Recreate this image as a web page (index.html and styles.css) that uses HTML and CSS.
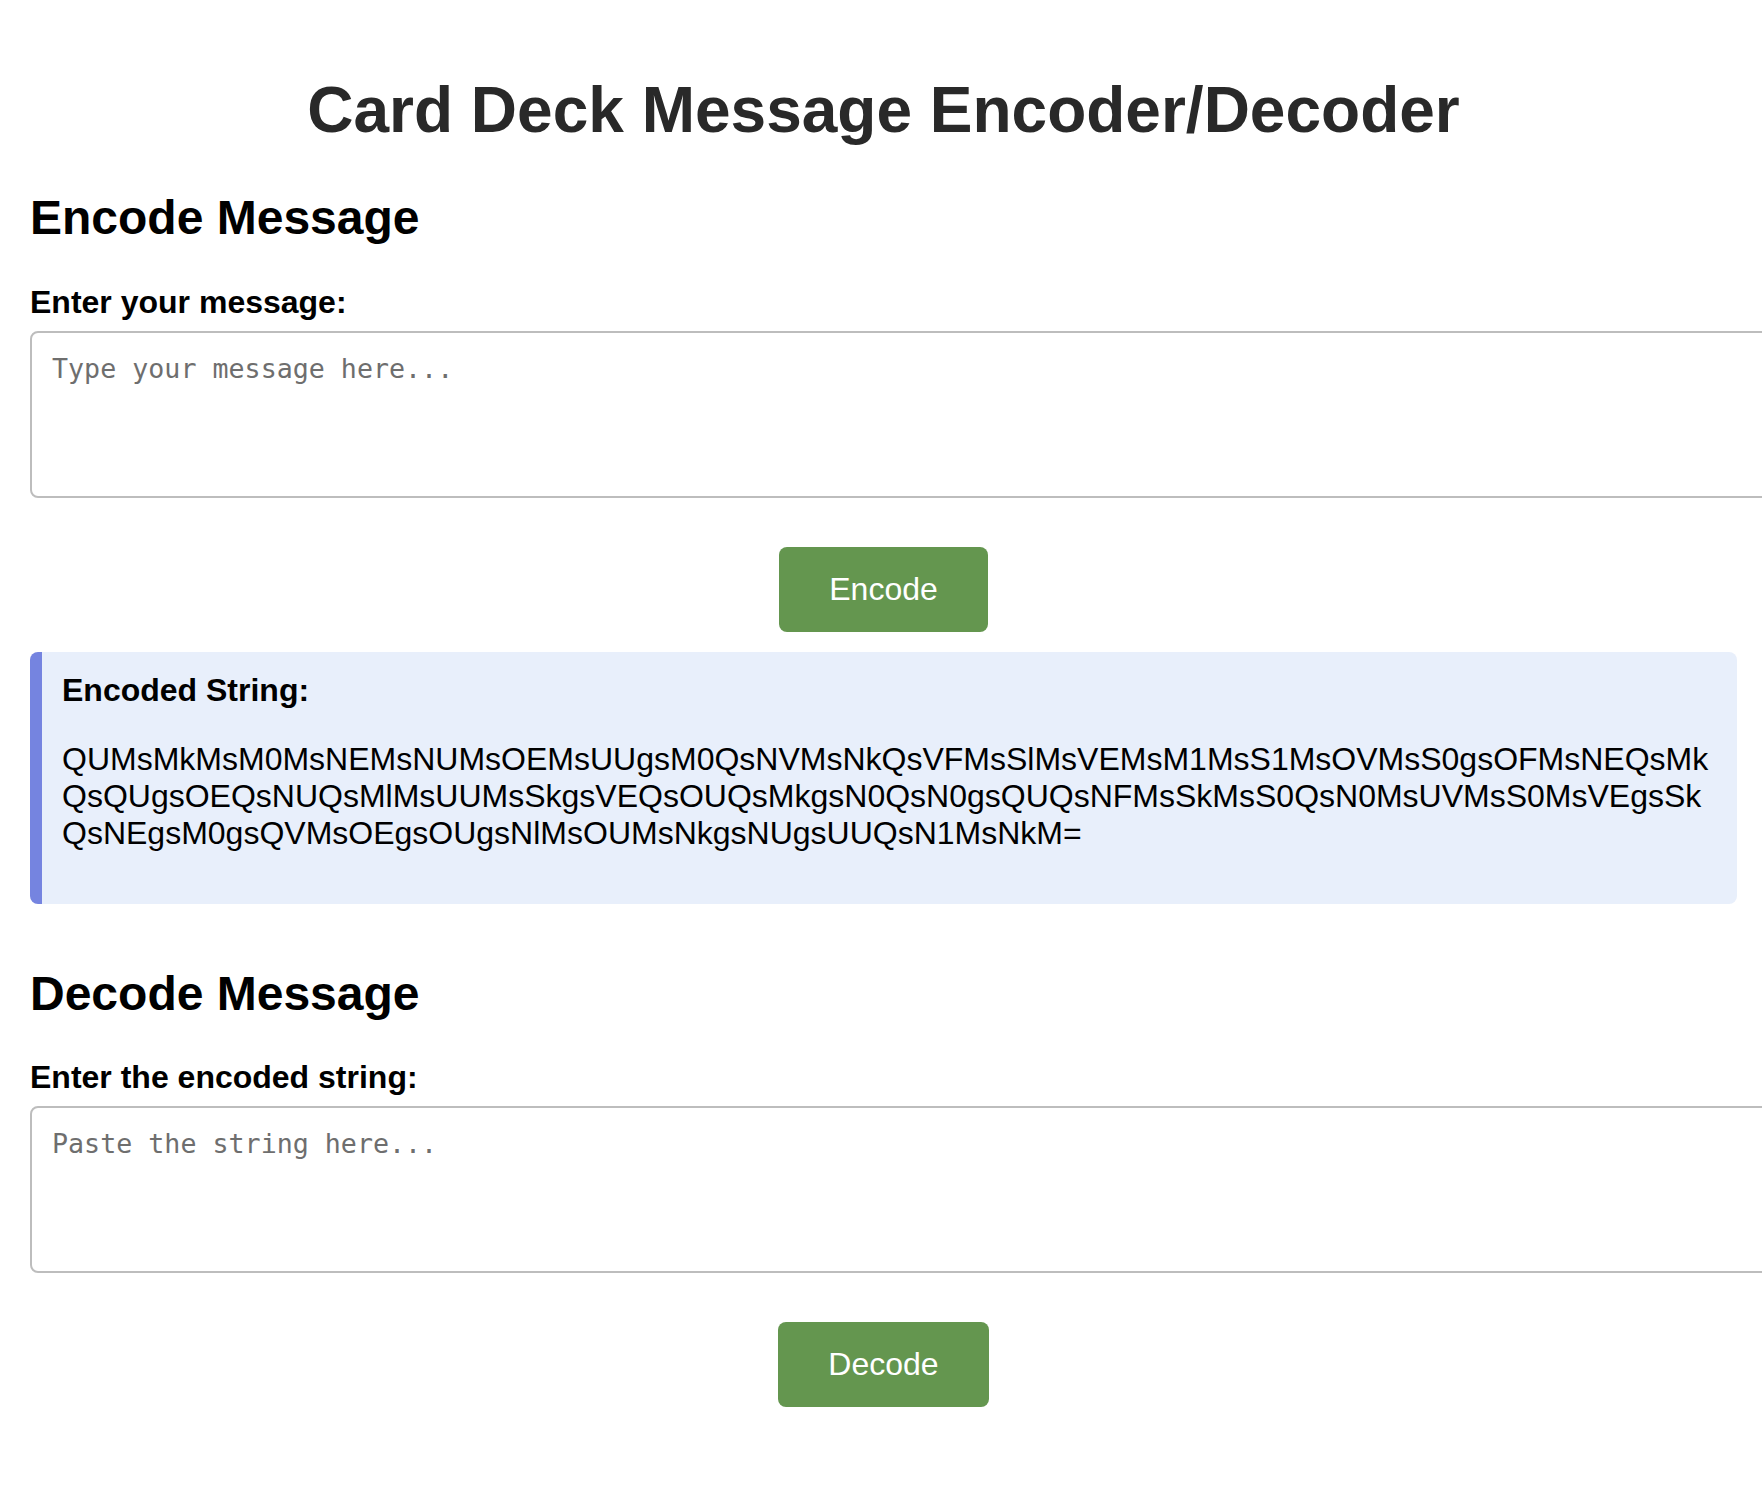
FILE: index.html
```html
<!DOCTYPE html>
<html lang="en">
<head>
<meta charset="utf-8">
<title>Card Deck Message Encoder/Decoder</title>
<link rel="stylesheet" href="styles.css">
</head>
<body>
<div class="container">
  <h1 class="title">Card Deck Message Encoder/Decoder</h1>

  <section class="section">
    <h2 class="section-title">Encode Message</h2>
    <label class="field-label" for="msg">Enter your message:</label>
    <textarea id="msg" class="field" placeholder="Type your message here..."></textarea>
    <div class="btn-row">
      <button class="btn" type="button">Encode</button>
    </div>
    <div class="result">
      <strong class="result-label">Encoded String:</strong>
      <p class="result-text">QUMsMkMsM0MsNEMsNUMsOEMsUUgsM0QsNVMsNkQsVFMsSlMsVEMsM1MsS1MsOVMsS0gsOFMsNEQsMkQsQUgsOEQsNUQsMlMsUUMsSkgsVEQsOUQsMkgsN0QsN0gsQUQsNFMsSkMsS0QsN0MsUVMsS0MsVEgsSkQsNEgsM0gsQVMsOEgsOUgsNlMsOUMsNkgsNUgsUUQsN1MsNkM=</p>
    </div>
  </section>

  <section class="section section-decode">
    <h2 class="section-title">Decode Message</h2>
    <label class="field-label" for="enc">Enter the encoded string:</label>
    <textarea id="enc" class="field" placeholder="Paste the string here..."></textarea>
    <div class="btn-row">
      <button class="btn" type="button">Decode</button>
    </div>
  </section>
</div>
</body>
</html>
```

FILE: styles.css
```css
html {
  overflow-x: hidden;
}

body {
  margin: 0;
  padding: 30px 25px 0 30px;
  font-family: "Liberation Sans", Arial, Helvetica, sans-serif;
  color: #000;
  background: #fff;
}

.container {
  width: 1707px;
}

.title {
  font-size: 64px;
  font-weight: bold;
  text-align: center;
  color: #292929;
  margin: 42.9px 0;
  line-height: normal;
}

.section-title {
  font-size: 48px;
  font-weight: bold;
  margin: 39.8px 0 38.8px;
  line-height: normal;
}

.field-label {
  display: block;
  font-size: 32px;
  font-weight: bold;
  margin-bottom: 10px;
}

.field {
  display: block;
  width: 100%;
  height: 123px;
  padding: 20px;
  border: 2px solid #bdbdbd;
  border-radius: 8px;
  font-family: "DejaVu Sans Mono", "Liberation Mono", monospace;
  font-size: 26.67px;
  resize: vertical;
  background: #fff;
  margin: 0;
}

.field::placeholder {
  color: #6e6e6e;
}

.btn-row {
  display: flex;
  justify-content: center;
  margin-top: 49px;
}

.btn {
  font-family: "Liberation Sans", Arial, Helvetica, sans-serif;
  font-size: 32px;
  line-height: normal;
  color: #fff;
  background: #64964f;
  border: none;
  border-radius: 8px;
  padding: 24px 50px;
  cursor: pointer;
}

.result {
  margin-top: 20px;
  padding: 20px;
  background: #e8effb;
  border-left: 12px solid #7584e0;
  border-radius: 8px;
}

.result-label {
  display: block;
  font-size: 32px;
  font-weight: bold;
}

.result-text {
  font-size: 32px;
  margin: 32px 0;
  word-break: break-all;
  line-height: normal;
}

.section-decode {
  margin-top: 62px;
}

.section-decode .section-title {
  margin-top: 0;
}
```
